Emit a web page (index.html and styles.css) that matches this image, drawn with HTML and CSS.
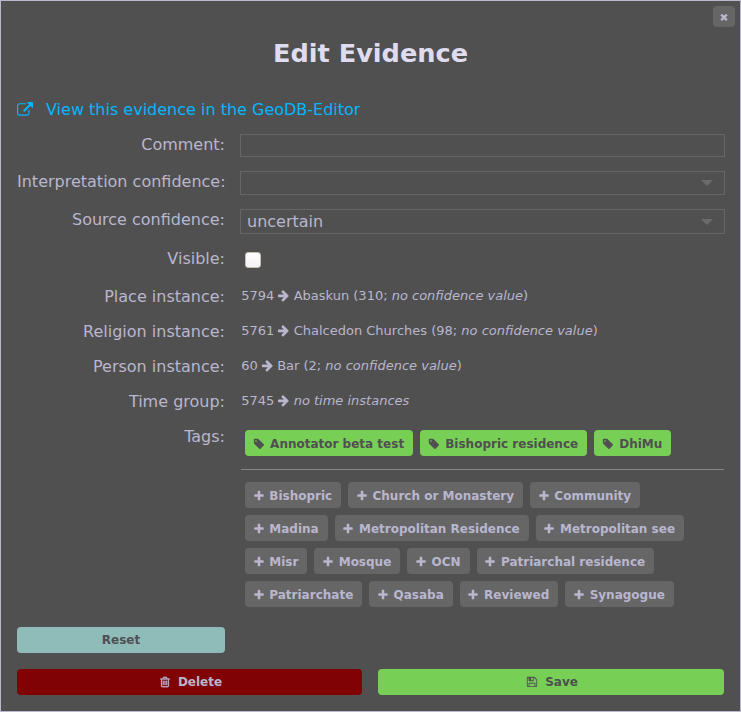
FILE: index.html
```
<!DOCTYPE html>
<html lang="en">
<head>
<meta charset="utf-8">
<title>Edit Evidence</title>
<link rel="stylesheet" href="styles.css">
</head>
<body>
<svg class="sprite" aria-hidden="true">
<symbol id="plus" viewBox="0 0 1792 1792"><path d="M1600 736v192q0 40-28 68t-68 28h-416v416q0 40-28 68t-68 28h-192q-40 0-68-28t-28-68v-416h-416q-40 0-68-28t-28-68v-192q0-40 28-68t68-28h416v-416q0-40 28-68t68-28h192q40 0 68 28t28 68v416h416q40 0 68 28t28 68z"/></symbol>
<symbol id="tag" viewBox="0 0 1792 1792"><path d="M576 448q0-53-37.500-90.500t-90.500-37.500-90.500 37.500-37.500 90.500 37.500 90.500 90.500 37.500 90.500-37.500 37.500-90.500zm1067 576q0 53-37 90l-491 492q-39 37-91 37-53 0-90-37l-715-716q-38-37-64.500-101t-26.500-117v-416q0-52 38-90t90-38h416q53 0 117 26.500t102 64.500l715 714q37 39 37 91z"/></symbol>
<symbol id="arrow" viewBox="0 0 1792 1792"><path d="M1600 960q0 54-37 91l-651 651q-39 37-91 37-51 0-90-37l-75-75q-38-38-38-91t38-91l293-293h-704q-52 0-84.500-37.500t-32.500-90.500v-128q0-53 32.500-90.500t84.500-37.500h704l-293-294q-38-36-38-90t38-90l75-75q38-38 90-38 53 0 91 38l651 651q37 35 37 90z"/></symbol>
<symbol id="times" viewBox="0 0 1792 1792"><path d="M1490 1322q0 40-28 68l-136 136q-28 28-68 28t-68-28l-294-294-294 294q-28 28-68 28t-68-28l-136-136q-28-28-28-68t28-68l294-294-294-294q-28-28-28-68t28-68l136-136q28-28 68-28t68 28l294 294 294-294q28-28 68-28t68 28l136 136q28 28 28 68t-28 68l-294 294 294 294q28 28 28 68z"/></symbol>
<symbol id="external" viewBox="0 0 1792 1792"><path d="M1408 928v320q0 119-84.500 203.500t-203.500 84.500h-832q-119 0-203.500-84.500t-84.500-203.500v-832q0-119 84.500-203.500t203.500-84.500h704q14 0 23 9t9 23v64q0 14-9 23t-23 9h-704q-66 0-113 47t-47 113v832q0 66 47 113t113 47h832q66 0 113-47t47-113v-320q0-14 9-23t23-9h64q14 0 23 9t9 23zm384-864v512q0 26-19 45t-45 19-45-19l-176-176-652 652q-10 10-23 10t-23-10l-114-114q-10-10-10-23t10-23l652-652-176-176q-19-19-19-45t19-45 45-19h512q26 0 45 19t19 45z"/></symbol>
<symbol id="trash" viewBox="0 0 1792 1792"><path d="M704 736v576q0 14-9 23t-23 9h-64q-14 0-23-9t-9-23v-576q0-14 9-23t23-9h64q14 0 23 9t9 23zm256 0v576q0 14-9 23t-23 9h-64q-14 0-23-9t-9-23v-576q0-14 9-23t23-9h64q14 0 23 9t9 23zm256 0v576q0 14-9 23t-23 9h-64q-14 0-23-9t-9-23v-576q0-14 9-23t23-9h64q14 0 23 9t9 23zm128 724v-948h-896v948q0 22 7 40.500t14.500 27 10.500 8.500h832q3 0 10.500-8.500t14.500-27 7-40.500zm-672-1076h448l-48-117q-7-9-17-11h-317q-10 2-17 11zm928 32v64q0 14-9 23t-23 9h-96v948q0 83-47 143.500t-113 60.500h-832q-66 0-113-58.500t-47-141.500v-952h-96q-14 0-23-9t-9-23v-64q0-14 9-23t23-9h309l70-167q15-37 54-63t79-26h320q40 0 79 26t54 63l70 167h309q14 0 23 9t9 23z"/></symbol>
<symbol id="floppy" viewBox="0 0 1792 1792"><path d="M512 1536h768v-384h-768v384zm896 0h128v-896q0-14-10-38.500t-20-34.500l-281-281q-10-10-34-20t-39-10v416q0 40-28 68t-68 28h-576q-40 0-68-28t-28-68v-416h-128v1280h128v-416q0-40 28-68t68-28h832q40 0 68 28t28 68v416zm-384-928v-320q0-13-9.500-22.500t-22.500-9.500h-192q-13 0-22.500 9.500t-9.500 22.500v320q0 13 9.500 22.500t22.500 9.500h192q13 0 22.500-9.500t9.500-22.500zm640 32v896q0 40-28 68t-68 28h-1344q-40 0-68-28t-28-68v-1344q0-40 28-68t68-28h928q40 0 88 20t76 48l280 280q28 28 48 76t20 88z"/></symbol>
</svg>
<main class="dialog">
  <button class="close" aria-label="Close"><svg class="icon"><use href="#times"/></svg></button>
  <h1 class="title">Edit Evidence</h1>
  <a class="editor-link"><svg class="icon"><use href="#external"/></svg><span>View this evidence in the GeoDB-Editor</span></a>
  <div class="form">
    <label class="label">Comment:</label>
    <div class="field field-text"></div>
    <label class="label">Interpretation confidence:</label>
    <div class="field field-empty"><svg class="caret" viewBox="0 0 12 6"><path d="M0 0h12L6 6z"/></svg></div>
    <label class="label">Source confidence:</label>
    <div class="field field-select"><span>uncertain</span><svg class="caret" viewBox="0 0 12 6"><path d="M0 0h12L6 6z"/></svg></div>
    <label class="label">Visible:</label>
    <div class="checkbox"></div>
    <label class="label">Place instance:</label>
    <div class="value">5794 <svg class="icon"><use href="#arrow"/></svg> Abaskun (310; <em>no confidence value</em>)</div>
    <label class="label">Religion instance:</label>
    <div class="value">5761 <svg class="icon"><use href="#arrow"/></svg> Chalcedon Churches (98; <em>no confidence value</em>)</div>
    <label class="label">Person instance:</label>
    <div class="value">60 <svg class="icon"><use href="#arrow"/></svg> Bar (2; <em>no confidence value</em>)</div>
    <label class="label">Time group:</label>
    <div class="value">5745 <svg class="icon"><use href="#arrow"/></svg> <em>no time instances</em></div>
    <label class="label">Tags:</label>
    <div class="tags">
      <div class="tag-list">
        <button class="tag tag-on"><svg class="icon"><use href="#tag"/></svg>Annotator beta test</button>
        <button class="tag tag-on"><svg class="icon"><use href="#tag"/></svg>Bishopric residence</button>
        <button class="tag tag-on"><svg class="icon"><use href="#tag"/></svg>DhiMu</button>
      </div>
      <hr class="rule">
      <div class="tag-list">
        <button class="tag"><svg class="icon"><use href="#plus"/></svg>Bishopric</button>
        <button class="tag"><svg class="icon"><use href="#plus"/></svg>Church or Monastery</button>
        <button class="tag"><svg class="icon"><use href="#plus"/></svg>Community</button>
        <button class="tag"><svg class="icon"><use href="#plus"/></svg>Madina</button>
        <button class="tag"><svg class="icon"><use href="#plus"/></svg>Metropolitan Residence</button>
        <button class="tag"><svg class="icon"><use href="#plus"/></svg>Metropolitan see</button>
        <button class="tag"><svg class="icon"><use href="#plus"/></svg>Misr</button>
        <button class="tag"><svg class="icon"><use href="#plus"/></svg>Mosque</button>
        <button class="tag"><svg class="icon"><use href="#plus"/></svg>OCN</button>
        <button class="tag"><svg class="icon"><use href="#plus"/></svg>Patriarchal residence</button>
        <button class="tag"><svg class="icon"><use href="#plus"/></svg>Patriarchate</button>
        <button class="tag"><svg class="icon"><use href="#plus"/></svg>Qasaba</button>
        <button class="tag"><svg class="icon"><use href="#plus"/></svg>Reviewed</button>
        <button class="tag"><svg class="icon"><use href="#plus"/></svg>Synagogue</button>
      </div>
    </div>
  </div>
  <button class="action reset">Reset</button>
  <div class="actions">
    <button class="action delete"><svg class="icon"><use href="#trash"/></svg>Delete</button>
    <button class="action save"><svg class="icon"><use href="#floppy"/></svg>Save</button>
  </div>
</main>
</body>
</html>
```
FILE: styles.css
```
* { box-sizing: border-box; }
body { margin: 0; font: 16px/19px "DejaVu Sans", sans-serif; color: #b9b6ce; background: #505050; }
button { font: bold 12px/14px "DejaVu Sans", sans-serif; border: 0; border-radius: 4px; color: #b9b6ce; background: #666; padding: 0; white-space: nowrap; }
.sprite { display: none; }
.icon { width: 12px; height: 12px; fill: currentColor; flex: none; }
.dialog { position: relative; width: 741px; height: 712px; border: 1px solid #b9b6ce; padding: 37px 16px 0; background: #505050; }
.close { position: absolute; top: 5px; right: 5px; width: 22px; height: 21px; display: flex; align-items: center; justify-content: center; }
.close .icon { width: 10px; height: 10px; stroke: currentColor; stroke-width: 60px; }
.title { margin: 0; height: 62px; text-align: center; font-size: 25.6px; line-height: 30px; color: #dfdcf0; }
.editor-link { display: flex; align-items: center; height: 19px; gap: 13px; color: #00b7ff; }
.editor-link .icon { width: 16px; height: 16px; }
.form { display: grid; grid-template-columns: 208px 483px; column-gap: 16px; grid-template-rows: 37px 38px 39px 38px 35px 35px 35px 35px 181px; margin-top: 15px; }
.label { text-align: right; white-space: nowrap; padding-top: 1px; }
.field { border: 1px solid #666; width: 485px; margin-left: -1px; padding: 0 11px 0 6px; display: flex; align-items: center; }
.field-text { height: 23px; }
.field-empty { height: 24px; }
.field-select { height: 25px; }
.caret { width: 12px; height: 6px; margin-left: auto; fill: #6b6b6b; }
.checkbox { width: 16px; height: 16px; margin: 4px; border: 1px solid #c5bfb5; border-radius: 3px; background: linear-gradient(#fff, #f3f3f3); }
.value { font-size: 13px; line-height: 19px; white-space: nowrap; padding-left: 0.3px; }
.value .icon { width: 13px; height: 13px; vertical-align: -2px; margin: 0 -0.7px 0 -1.3px; }
.tags { padding: 4px 0 0; }
.tag-list { display: flex; flex-wrap: wrap; gap: 7px; padding: 0 4px; }
.tag { display: flex; align-items: center; height: 26px; gap: 4.7px; padding: 2px 9px 0 7.6px; }
.tag-on { background: #77cf56; color: #505050; gap: 5px; padding: 2px 9px 0 8.1px; }
.rule { border: 0; height: 1px; background: #858585; margin: 13px 0 12px; }
.action { height: 26px; display: flex; align-items: center; justify-content: center; gap: 7px; }
.reset { width: 208px; margin-top: 20px; background: #8fbbb9; color: #505050; }
.actions { display: grid; grid-template-columns: 345px 346px; gap: 16px; margin-top: 16px; }
.delete { background: #800204; padding-left: 2px; }
.delete .icon { stroke: currentColor; stroke-width: 50px; }
.save { background: #77cf56; color: #505050; padding-left: 2px; }
```
